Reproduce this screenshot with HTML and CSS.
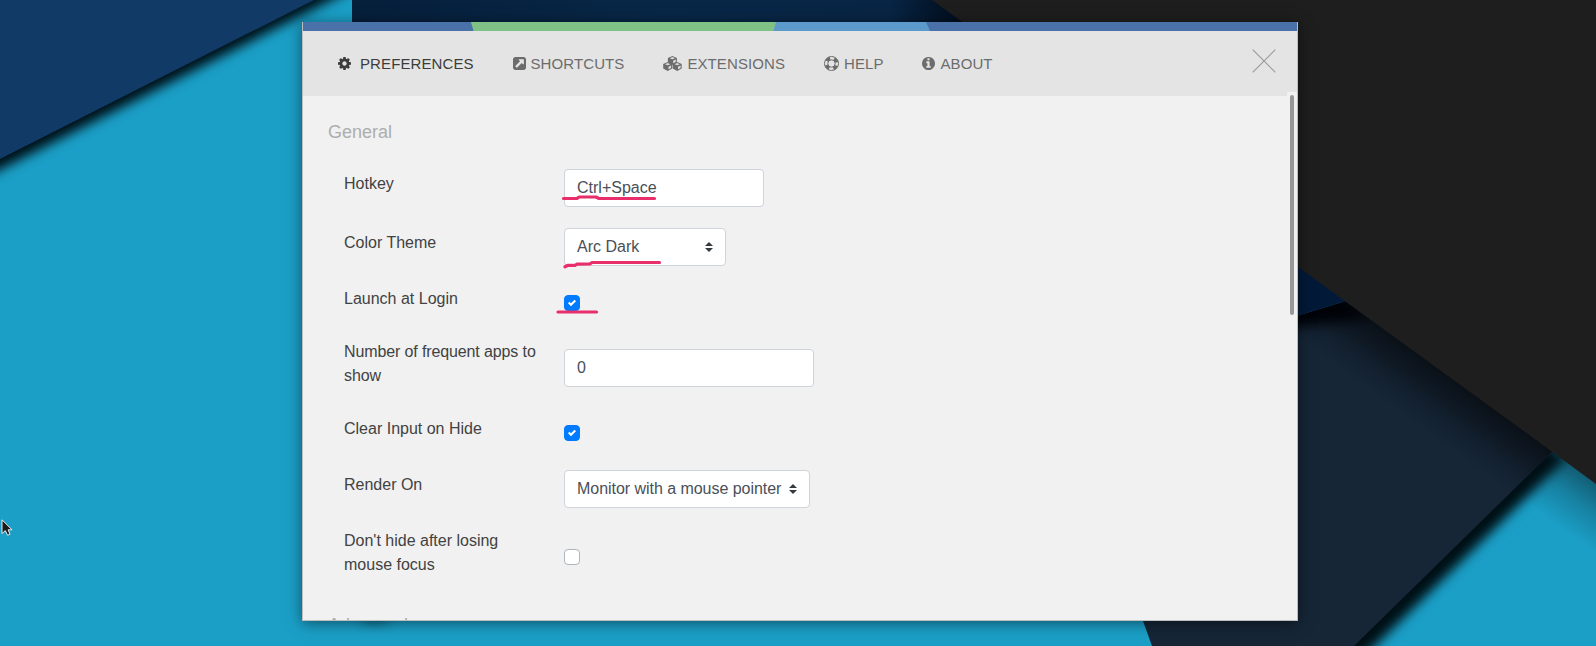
FILE: index.html
```html
<!DOCTYPE html>
<html lang="en">
<head>
<meta charset="utf-8">
<title>Preferences</title>
<link rel="stylesheet" href="styles.css">
</head>
<body>
<svg class="wallpaper" viewBox="0 0 1596 646" aria-hidden="true">
  <defs>
    <filter id="soft" filterUnits="userSpaceOnUse" x="-100" y="-100" width="1800" height="850" color-interpolation-filters="sRGB"><feGaussianBlur stdDeviation="6"/></filter>
    <clipPath id="slate"><path d="M1280 321L1343 302L1360 290L1570 435L1551 453L1354 646H1152L1143 621L1200 500Z"/></clipPath>
    <linearGradient id="band" x1="0" x2="1"><stop offset="0" stop-color="#061f3b"/><stop offset=".5" stop-color="#082747"/><stop offset=".88" stop-color="#082545"/><stop offset="1" stop-color="#010d1b"/></linearGradient>
    <linearGradient id="edge" gradientUnits="userSpaceOnUse" x1="1450" y1="377" x2="1415" y2="425"><stop offset="0" stop-color="#070b10" stop-opacity=".8"/><stop offset=".4" stop-color="#070b10" stop-opacity=".45"/><stop offset="1" stop-color="#0a1625" stop-opacity="0"/></linearGradient>
    <linearGradient id="edge2" gradientUnits="userSpaceOnUse" x1="1596" y1="484" x2="1563" y2="530"><stop offset="0" stop-color="#0c2a34" stop-opacity=".55"/><stop offset=".45" stop-color="#0c2a34" stop-opacity=".25"/><stop offset="1" stop-color="#0c2a34" stop-opacity="0"/></linearGradient>
  </defs>
  <rect width="1596" height="646" fill="#1b9fc7"/>
  <path d="M-30 -30H390L-30 185Z" fill="#000f16" filter="url(#soft)"/>
  <path d="M0 0H314L0 159Z" fill="#113a67"/>
  <rect x="352" width="610" height="60" fill="url(#band)"/>
  <ellipse cx="375" cy="619" rx="15" ry="3" fill="#012638" opacity=".8" filter="url(#soft)"/>
  <path d="M1500 400H1596V646H1480Z" fill="url(#edge2)"/>
  <path d="M1557 459L1350 662L1300 640L1520 440Z" stroke="#000f14" stroke-width="12" fill="#000f14" filter="url(#soft)"/>
  <path d="M1280 321L1343 302L1360 290L1570 435L1551 453L1354 646H1152L1143 621L1200 500Z" fill="#162637"/>
  <g clip-path="url(#slate)">
    <path d="M1290 250H1596V646H1290Z" fill="url(#edge)"/>
    <path d="M1270 316L1343 293L1370 318L1290 327Z" fill="#000207" filter="url(#soft)"/>
  </g>
  <path d="M1290 255L1360 300L1343 302L1290 318Z" fill="#021a38"/>
  <path d="M932 0H1596V484L1551 451L1298 267Z" fill="#1e1e1e"/>
</svg>

<main class="window">
  <svg class="strip" viewBox="0 0 994 9" aria-hidden="true">
    <rect width="994" height="9" fill="#4a72a9"/>
    <path d="M168 0H474L471 9H170.500Z" fill="#80c285"/>
    <path d="M473 0H623L627 9H470.500Z" fill="#5c9acc"/>
  </svg>
  <header class="header">
    <nav class="tabs">
      <a class="tab active"><svg class="icon i-cog" viewBox="128 128 1536 1536"><path d="M1152 896q0-106-75-181t-181-75-181 75-75 181 75 181 181 75 181-75 75-181zm512-109v222q0 12-8 23t-20 13l-185 28q-19 54-39 91 35 50 107 138 10 12 10 25t-9 23q-27 37-99 108t-94 71q-12 0-26-9l-138-108q-44 23-91 38-16 136-29 186-7 28-36 28h-222q-14 0-24.500-8.500t-11.500-21.500l-28-184q-49-16-90-37l-141 107q-10 9-25 9-14 0-25-11-126-114-165-168-7-10-7-23 0-12 8-23 15-21 51-66.500t54-70.500q-27-50-41-99l-183-27q-13-2-21-12.500t-8-23.500v-222q0-12 8-23t19-13l186-28q14-46 39-92-40-57-107-138-10-12-10-24 0-10 9-23 26-36 98.500-107.500t94.500-71.500q13 0 26 10l138 107q44-23 91-38 16-136 29-186 7-28 36-28h222q14 0 24.500 8.500t11.500 21.500l28 184q49 16 90 37l142-107q9-9 24-9 13 0 25 10 129 119 165 170 7 8 7 22 0 12-8 23-15 21-51 66.500t-54 70.500q26 50 41 98l183 28q13 2 21 12.500t8 23.500z"/></svg>PREFERENCES</a>
      <a class="tab"><svg class="icon" viewBox="128 128 1536 1536"><path d="M1408 928v-480q0-26-19-45t-45-19h-480q-42 0-59 39-17 41 14 70l144 144-534 534q-19 19-19 45t19 45l102 102q19 19 45 19t45-19l534-534 144 144q18 19 45 19 12 0 25-5 39-17 39-59zm256-512v960q0 119-84.500 203.500t-203.500 84.500h-960q-119 0-203.500-84.500t-84.500-203.500v-960q0-119 84.500-203.500t203.500-84.500h960q119 0 203.500 84.500t84.500 203.500z"/></svg>SHORTCUTS</a>
      <a class="tab"><svg class="icon i-cubes" viewBox="0 0 19 15">
        <defs><g id="cube"><path d="M4.700 .1L9.200 2V6.600L4.700 8.900L.2 6.600V2Z"/><path d="M4.700 1.100L7.300 2.200L4.700 3.300L2.100 2.200ZM5.500 4.700L8.100 3.600V5.900L5.500 7.300Z" class="hollow"/></g></defs>
        <use href="#cube" x="4.700" y="0"/><use href="#cube" x="0" y="6"/><use href="#cube" x="9.500" y="6"/>
      </svg>EXTENSIONS</a>
      <a class="tab"><svg class="icon i-ring" viewBox="0 0 15 15"><circle cx="7.500" cy="7.500" r="7" class="line"/><circle cx="7.500" cy="7.500" r="3.700" class="line"/><circle cx="7.500" cy="7.500" r="5.400" class="spokes"/></svg>HELP</a>
      <a class="tab"><svg class="icon" viewBox="128 128 1536 1536"><path d="M1152 1376v-160q0-14-9-23t-23-9h-96v-512q0-14-9-23t-23-9h-320q-14 0-23 9t-9 23v160q0 14 9 23t23 9h96v320h-96q-14 0-23 9t-9 23v160q0 14 9 23t23 9h448q14 0 23-9t9-23zm-128-896v-160q0-14-9-23t-23-9h-192q-14 0-23 9t-9 23v160q0 14 9 23t23 9h192q14 0 23-9t9-23zm640 416q0 209-103 385.500t-279.500 279.500-385.500 103-385.500-103-279.500-279.500-103-385.500 103-385.500 279.500-279.500 385.500-103 385.500 103 279.500 279.500 103 385.500z"/></svg>ABOUT</a>
    </nav>
    <svg class="close" viewBox="0 0 24 24"><path d="M.7 .7L23.300 23.300M23.300 .7L.7 23.300"/></svg>
  </header>
  <section class="content">
    <h2 class="heading">General</h2>
    <div class="row row-lg"><span class="label">Hotkey</span><div class="field hotkey">Ctrl+Space</div></div>
    <div class="row"><span class="label">Color Theme</span><div class="field select theme">Arc Dark<svg class="caret" viewBox="0 0 8 10"><path d="M0 4L4 0L8 4ZM0 6H8L4 10Z"/></svg></div></div>
    <div class="row row-sm low"><span class="label">Launch at Login</span><span class="check on"><svg viewBox="0 0 8 8"><path d="M6.564 .75L2.974 4.368L1.436 2.824L0 4.260L2.974 7.250L8 2.193Z"/></svg></span></div>
    <div class="row row-double"><span class="label tight">Number of frequent apps to show</span><div class="field count">0</div></div>
    <div class="row row-mid"><span class="label">Clear Input on Hide</span><span class="check on"><svg viewBox="0 0 8 8"><path d="M6.564 .75L2.974 4.368L1.436 2.824L0 4.260L2.974 7.250L8 2.193Z"/></svg></span></div>
    <div class="row row-render low"><span class="label">Render On</span><div class="field select monitor"><span class="tight-sm">Monitor with a mouse pointer</span><svg class="caret" viewBox="0 0 8 10"><path d="M0 4L4 0L8 4ZM0 6H8L4 10Z"/></svg></div></div>
    <div class="row row-last low"><span class="label">Don't hide after losing mouse focus</span><span class="check"></span></div>
    <h2 class="heading">Advanced</h2>
  </section>
  <div class="scroll"><div class="thumb"></div></div>
</main>

<svg class="marks" viewBox="0 0 1596 646" aria-hidden="true">
  <path d="M563.500 198.500H577L579 197H596L599 198.500H654.500M565 266.800L568 265.300H575L577 264.200L590 263.800L592 262.500H659.500M558 312H596.500"/>
</svg>
<svg class="cursor" viewBox="0 0 13 19"><path d="M1 .8V14.500L4.300 11.600L6.600 16.300L9 15.200L7.100 10.800H11Z"/></svg>
</body>
</html>
```

FILE: styles.css
```css
* { box-sizing: border-box; }
body {
  margin: 0;
  width: 1596px;
  height: 646px;
  overflow: hidden;
  padding: 22px 0 0 302px;
  font: 16px/24px "Liberation Sans", Arial, sans-serif;
  color: #424242;
}
.wallpaper, .marks {
  position: absolute;
  left: 0;
  top: 0;
  width: 1596px;
  height: 646px;
}
.window {
  position: relative;
  display: flex;
  flex-direction: column;
  width: 996px;
  height: 599px;
  border: 1px solid #bdbdbd;
  border-top: 0;
  background: #f1f1f1;
  box-shadow: 0 2px 14px rgba(0, 0, 0, .5);
}
.strip { display: block; width: 994px; height: 9px; flex: none; }
.header {
  display: flex;
  justify-content: space-between;
  align-items: flex-start;
  flex: none;
  height: 65px;
  padding: 18px 21px 0 35px;
  background: #e4e4e4;
}
.tabs { display: flex; gap: 38.9px; padding-top: 3px; }
.tab {
  display: flex;
  align-items: center;
  gap: 5px;
  font-size: 15px;
  line-height: 24px;
  letter-spacing: .1px;
  color: #6c6c6c;
}
.tab.active { color: #3c3c3c; gap: 9px; }
.icon { width: 13px; height: 13px; fill: currentColor; margin-top: -1px; }
.i-cubes { width: 19px; height: 15px; }
.hollow { fill: #dedede; }
.i-ring { width: 15px; height: 15px; }
.line { fill: none; stroke: currentColor; stroke-width: 1; }
.spokes {
  fill: none;
  stroke: currentColor;
  stroke-width: 3.4;
  stroke-dasharray: 4.2 4.282;
  stroke-dashoffset: -2.141;
}
.close { width: 24px; height: 24px; fill: none; stroke: #999; stroke-width: 1.1; }
.content { flex: 1; min-height: 0; overflow: hidden; padding: 24px 25px 0; }
.heading {
  margin: 0;
  height: 45px;
  font-size: 18px;
  line-height: 24px;
  font-weight: 400;
  color: #adadad;
}
.row {
  display: flex;
  align-items: flex-start;
  height: 55px;
  padding-left: 16px;
}
.label { width: 220px; padding: 7px 20px 0 0; flex: none; }
.low .label { padding-top: 8px; }
.tight { letter-spacing: -.12px; }
.tight-sm { letter-spacing: -.04px; }
.row-lg { height: 59px; }
.row-sm { height: 54px; }
.row-double { height: 77px; }
.row-render { height: 56px; }
.row-last { height: 92px; }
.field {
  height: 38px;
  margin-top: 4px;
  padding: 6px 12px;
  border: 1px solid #ced4da;
  border-radius: 4px;
  background: #fff;
  color: #495057;
}
.select { display: flex; justify-content: space-between; align-items: center; white-space: nowrap; }
.hotkey { width: 200px; }
.theme { width: 162px; }
.count { width: 250px; margin-top: 16px; }
.monitor { width: 246px; margin-top: 5px; }
.caret { width: 8px; height: 10px; fill: #343a40; }
.check {
  display: grid;
  place-items: center;
  width: 16px;
  height: 16px;
  margin-top: 16px;
  border: 1px solid #adb5bd;
  border-radius: 4px;
  background: #fff;
}
.check.on { background: #007bff; border-color: #007bff; }
.check svg { width: 8px; height: 8px; fill: #fff; }
.row-mid .check { margin-top: 15px; }
.row-last .check { margin-top: 28px; }
.scroll {
  position: absolute;
  right: 0;
  top: 70px;
  width: 10px;
  height: 528px;
  padding: 3px;
  background: #f1f1f1;
}
.thumb { width: 4px; height: 220px; border-radius: 2px; background: #979797; }
.marks path {
  fill: none;
  stroke: #e82f6c;
  stroke-width: 3.2;
  stroke-linecap: round;
  stroke-linejoin: round;
}
.cursor {
  position: absolute;
  left: 1px;
  top: 519px;
  width: 13px;
  height: 19px;
  fill: #1b1b1b;
  stroke: #eee;
  stroke-width: 1;
}
```
